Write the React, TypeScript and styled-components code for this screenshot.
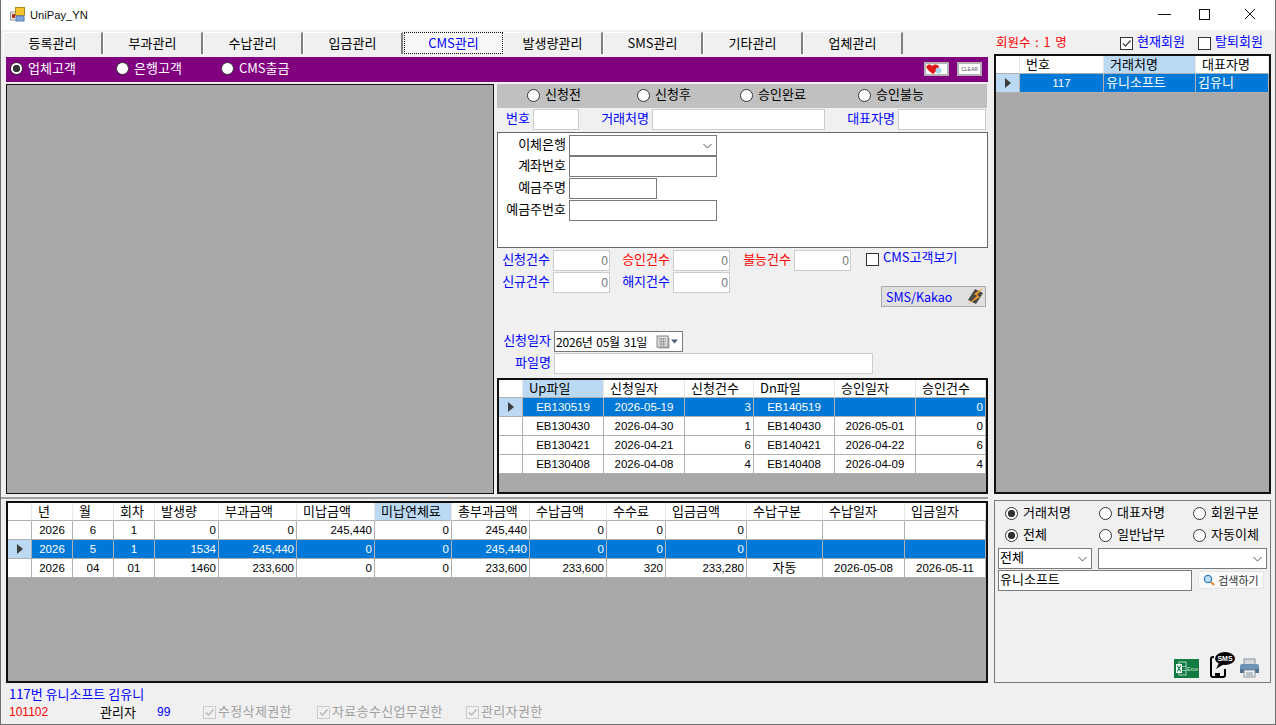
import React from "react";
import styled, { createGlobalStyle } from "styled-components";

const KO = `"Noto Sans CJK KR", "Noto Sans", sans-serif`;
const NUM = `"Liberation Sans", "Noto Sans CJK KR", sans-serif`;

const GlobalStyle = createGlobalStyle`
  html, body { margin: 0; padding: 0; background: #f0f0f0; }
  * { box-sizing: border-box; }
  body { font-family: ${KO}; font-size: 13px; color: #000; }
`;

const Page = styled.div`
  width: 1276px;
  height: 725px;
  overflow: hidden;
  display: flex;
  flex-direction: column;
  background: #f0f0f0;
  border: 1px solid #6e6e6e;
  border-top: 0;
`;

const TitleBar = styled.div`
  height: 30px;
  flex: none;
  display: flex;
  align-items: center;
  background: #fff;
  padding: 0 2px 1px 9px;
`;

const TitleText = styled.span`
  margin-left: 5px;
  font: 11.2px "Liberation Sans", sans-serif;
  color: #111;
`;

const WindowButtons = styled.div`
  margin-left: auto;
  display: flex;
  align-items: center;
  color: #111;
`;

const WindowButton = styled.div<{ $w?: number }>`
  width: ${(p) => p.$w ?? 46}px;
  height: 30px;
  display: grid;
  place-items: center;
  padding-bottom: 1px;
`;

const TabRow = styled.div`
  height: 24px;
  flex: none;
  display: flex;
  align-items: flex-start;
  padding: 2px 0 0 2px;
`;

const Tab = styled.div<{ $active?: boolean }>`
  width: 100px;
  height: 22px;
  display: grid;
  place-items: center;
  padding-bottom: 2px;
  line-height: 1;
  color: ${(p) => (p.$active ? "#0000ff" : "#000")};
  background: ${(p) => (p.$active ? "#f8f8f8" : "#f0f0f0")};
  border-top: 1px solid #fff;
  border-left: 1px solid #fff;
  border-right: 2px solid #808080;
  ${(p) => p.$active && "border: 1px dotted #111; width: 99px; margin-left: 1px;"}
`;

const MemberCount = styled.span`
  margin: 1px 0 0 93px;
  width: 124px;
  color: #f00;
  font-size: 12.5px;
  line-height: 18px;
  word-spacing: 2px;
`;

const CheckLine = styled.label<{ $w?: number }>`
  display: flex;
  align-items: center;
  gap: 4px;
  color: #0000ff;
  white-space: nowrap;
  line-height: 18px;
  height: 18px;
  ${(p) => p.$w && `width: ${p.$w}px;`}
`;

const CheckText = styled.span<{ $lift?: number }>`
  line-height: 14px;
  padding-bottom: ${(p) => p.$lift ?? 4}px;
`;

const TopChecks = styled.div`
  display: flex;
  margin-top: 2px;
`;

const Upper = styled.div`
  height: 445px;
  flex: none;
  display: flex;
  gap: 6px;
`;

const LeftCol = styled.div`
  width: 987px;
  padding: 3px 0 0 5px;
  border-bottom: 2px solid #a0a0a0;
`;

const PurpleBar = styled.div`
  height: 25px;
  display: flex;
  align-items: center;
  background: #800080;
  color: #fff;
  padding: 0 0 2px 4px;
`;

const RadioLine = styled.label<{ $w?: number; $color?: string }>`
  display: flex;
  align-items: center;
  gap: 5px;
  line-height: 18px;
  white-space: nowrap;
  color: ${(p) => p.$color || "inherit"};
  ${(p) => p.$w && `width: ${p.$w}px;`}
`;

const RadioText = styled.span`
  padding-bottom: 2px;
`;

const RadioDot = styled.span<{ $on?: boolean }>`
  width: 13px;
  height: 13px;
  flex: none;
  border-radius: 50%;
  background: ${(p) =>
    p.$on ? "radial-gradient(circle, #333 0 3.4px, #fff 4px)" : "#fff"};
  border: 1px solid #333;
`;

const CheckBox = styled.span<{ $off?: boolean }>`
  width: 13px;
  height: 13px;
  flex: none;
  display: grid;
  place-items: center;
  background: ${(p) => (p.$off ? "#f0f0f0" : "#fff")};
  border: 1px solid ${(p) => (p.$off ? "#ccc" : "#333")};
`;

const MiniButtons = styled.div`
  margin-left: auto;
  display: flex;
  gap: 8px;
  padding-right: 6px;
`;

const MiniButton = styled.div`
  width: 25px;
  height: 14px;
  display: grid;
  place-items: center;
  background: #fff;
  border: 2px solid #b4b4b4;
  font: 5px "Liberation Sans", sans-serif;
  color: #556;
`;

const Body = styled.div`
  display: flex;
  gap: 3px;
  margin-top: 2px;
`;

const EmptyPanel = styled.div`
  width: 488px;
  height: 410px;
  background: #a9a9a9;
  border: 1px solid #111;
`;

const FormCol = styled.div`
  width: 491px;
  display: flex;
  flex-direction: column;
`;

const StatusRadios = styled.div`
  height: 24px;
  width: 490px;
  display: flex;
  align-items: center;
  padding: 0 0 2px 30px;
  background: #c0c0c0;
`;

const FieldRow = styled.div<{ $top?: number }>`
  display: flex;
  align-items: center;
  gap: 3px;
  height: 21px;
  margin-top: ${(p) => p.$top ?? 1}px;
`;

const Label = styled.span<{ $w: number; $color?: string }>`
  width: ${(p) => p.$w}px;
  flex: none;
  text-align: right;
  line-height: 16px;
  padding-bottom: 4px;
  white-space: nowrap;
  color: ${(p) => p.$color || "#0000ff"};
`;

const Input = styled.div<{ $w: number; $dark?: boolean }>`
  width: ${(p) => p.$w}px;
  height: 21px;
  flex: none;
  display: flex;
  align-items: center;
  justify-content: space-between;
  padding: 0 1px;
  background: #fff;
  border: 1px solid ${(p) => (p.$dark ? "#7a7a7a" : "#cdcdcd")};
`;

const CountValue = styled.span`
  margin-left: auto;
  font: 12px ${NUM};
  color: #777;
`;

const BankBox = styled.div`
  width: 491px;
  height: 116px;
  margin-top: 2px;
  padding-top: 2px;
  background: #fff;
  border: 1px solid #666;
`;

const BankRow = styled.div`
  display: flex;
  align-items: center;
  gap: 3px;
  height: 21px;
  margin-bottom: 1px;
  &:first-child {
    margin-bottom: 0;
  }
`;

const Stats = styled.div`
  height: 81px;
  margin-top: 2px;
  display: flex;
`;

const StatsLeft = styled.div`
  width: 369px;
`;

const StatsRight = styled.div`
  flex: 1;
  display: flex;
  flex-direction: column;
  align-items: flex-end;
  padding-right: 1px;
`;

const SmsButton = styled.div`
  width: 105px;
  height: 21px;
  margin-top: 18px;
  margin-right: 1px;
  display: flex;
  align-items: center;
  justify-content: space-between;
  padding: 0 1px 0 4px;
  color: #0000ff;
  background: #dfdfdf;
  border: 1px solid #aaa;
  font-size: 12.5px;
`;

const DateText = styled.span`
  font-size: 12px;
  letter-spacing: -0.2px;
  word-spacing: 1px;
  padding-bottom: 1px;
  white-space: nowrap;
  color: #000;
`;

const PickerIcons = styled.span`
  display: flex;
  align-items: center;
  padding-right: 1px;
`;

const GridSlot = styled.div`
  margin-top: 4px;
`;

const Frame = styled.div<{ $h: number; $top?: number }>`
  height: ${(p) => p.$h}px;
  margin-top: ${(p) => p.$top ?? 0}px;
  display: flex;
  flex-direction: column;
  background: #a9a9a9;
  border: 2px solid #111;
`;

const GridRow = styled.div<{ $cols: string; $h: number; $sel?: boolean }>`
  display: grid;
  grid-template-columns: ${(p) => p.$cols};
  height: ${(p) => p.$h}px;
  flex: none;
  background: ${(p) => (p.$sel ? "#0078d7" : "#fff")};
  color: ${(p) => (p.$sel ? "#fff" : "#000")};
`;

const HeadCell = styled.div<{ $on?: boolean }>`
  padding: 0 0 0 6px;
  background: ${(p) => (p.$on ? "#bbd9f2" : "#fff")};
  border-right: 1px solid #e8e8e8;
  border-bottom: 1px solid #b0b0b0;
  line-height: 16px;
  white-space: nowrap;
`;

const Cell = styled.div<{ $align?: string; $ko?: boolean }>`
  padding: 0 2px;
  text-align: ${(p) => p.$align || "center"};
  font: ${(p) => (p.$ko ? `13px ${KO}` : `11.5px ${NUM}`)};
  line-height: ${(p) => (p.$ko ? 16 : 18)}px;
  border-right: 1px solid #b0b0b0;
  border-bottom: 1px solid #b0b0b0;
  white-space: nowrap;
`;

const RowHead = styled.div<{ $sel?: boolean }>`
  display: grid;
  place-items: center;
  background: ${(p) => (p.$sel ? "#bbd9f2" : "#fff")};
  border-right: 1px solid #b0b0b0;
  border-bottom: 1px solid #b0b0b0;
`;

const Arrow = styled.span`
  width: 0;
  height: 0;
  border-left: 6px solid #3c3c3c;
  border-top: 5px solid transparent;
  border-bottom: 5px solid transparent;
`;

const MemberPanel = styled.div`
  width: 277px;
  height: 440px;
`;

const Lower = styled.div`
  flex: none;
  display: flex;
  gap: 6px;
  padding: 1px 0 0 5px;
`;

const SearchPanel = styled.div`
  width: 277px;
  height: 183px;
  display: flex;
  flex-direction: column;
  padding: 1px 3px 0;
  border: 1px solid #777;
`;

const RadioGroup = styled.div`
  margin-bottom: 2px;
`;

const SearchRadios = styled.div`
  display: flex;
  height: 22px;
  align-items: center;
  padding-left: 7px;
`;

const SearchRow = styled.div`
  display: flex;
  gap: 6px;
  margin-bottom: 1px;
`;

const SearchValue = styled.span`
  line-height: 16px;
  padding-bottom: 3px;
  white-space: nowrap;
`;

const SearchButton = styled.div`
  width: 66px;
  height: 18px;
  margin-top: 1px;
  display: flex;
  align-items: center;
  justify-content: center;
  gap: 3px;
  background: #f9f9f9;
  border: 1px solid #e4e4e4;
  font-size: 11px;
  color: #333;
`;

const ToolIcons = styled.div`
  margin-top: auto;
  display: flex;
  align-items: flex-end;
  justify-content: flex-end;
  padding: 0 7px 4px 0;
`;

const Footer = styled.div`
  flex: 1;
  padding: 2px 0 0 8px;
  line-height: 18px;
`;

const FooterName = styled.div`
  color: #0000ff;
  font-size: 13px;
  line-height: 17px;
`;

const FooterRow = styled.div`
  display: flex;
  align-items: center;
  height: 18px;
  margin-top: 1px;
`;

const FooterText = styled.span<{ $w: number; $color?: string; $num?: boolean }>`
  width: ${(p) => p.$w}px;
  color: ${(p) => p.$color || "#000"};
  font: ${(p) => (p.$num ? `12px ${NUM}` : `13px ${KO}`)};
  line-height: 18px;
`;

const DisabledCheck = styled.label<{ $w: number }>`
  width: ${(p) => p.$w}px;
  display: flex;
  align-items: center;
  gap: 2px;
  color: #a0a0a0;
  letter-spacing: 0.35px;
  white-space: nowrap;
`;

type Col = { title: string; w: number; align?: string };

const DataGrid = ({
  cols,
  rows,
  height,
  top,
  selected,
  activeHead,
}: {
  cols: Col[];
  rows: string[][];
  height: number;
  top?: number;
  selected: number;
  activeHead: number;
}) => {
  const template = `${[24, ...cols.map((c) => c.w)].join("px ")}px`;
  return (
    <Frame $h={height} $top={top}>
      <GridRow $cols={template} $h={18}>
        <HeadCell />
        {cols.map((c, i) => (
          <HeadCell key={c.title} $on={i === activeHead}>
            {c.title}
          </HeadCell>
        ))}
      </GridRow>
      {rows.map((row, r) => (
        <GridRow key={r} $cols={template} $h={19} $sel={r === selected}>
          <RowHead $sel={r === selected}>{r === selected && <Arrow />}</RowHead>
          {row.map((v, i) => (
            <Cell key={i} $align={cols[i].align} $ko={/[가-힣]/.test(v)}>
              {v}
            </Cell>
          ))}
        </GridRow>
      ))}
    </Frame>
  );
};

const Radio = ({
  on,
  w,
  color,
  children,
}: {
  on?: boolean;
  w?: number;
  color?: string;
  children: React.ReactNode;
}) => (
  <RadioLine $w={w} $color={color}>
    <RadioDot $on={on} />
    <RadioText>{children}</RadioText>
  </RadioLine>
);

const Tick = ({ color = "#444" }: { color?: string }) => (
  <svg width="11" height="11" viewBox="0 0 11 11">
    <path d="M2 5.5 L4.5 8 L9.5 2.5" fill="none" stroke={color} strokeWidth="1.3" />
  </svg>
);

const Chevron = () => (
  <svg width="9" height="6" viewBox="0 0 9 6" style={{ marginRight: 3 }}>
    <path d="M0.5 1 L4.5 5 L8.5 1" fill="none" stroke="#555" />
  </svg>
);

const AppIcon = () => (
  <svg width="15" height="15" viewBox="0 0 15 15">
    <rect x="0.5" y="5" width="6" height="8" fill="#e8e8e8" stroke="#999" />
    <rect x="2" y="7" width="3" height="4" fill="#c03020" />
    <rect x="5.5" y="0.5" width="9" height="8" fill="#f4c430" stroke="#a88a20" />
    <rect x="6" y="9" width="8" height="5" fill="#7ea6e0" stroke="#5a7fb8" />
  </svg>
);

const HeartIcon = () => (
  <svg width="21" height="10" viewBox="0 0 21 10">
    <path
      d="M7 10 C3 7 0.5 5 0.5 3 C0.5 0.5 4 -0.5 6 2 C8 -0.5 13 0 13 3 C13 5 10 7.5 7 10 Z"
      fill="#e01818"
    />
    <circle cx="12.5" cy="6.5" r="3" fill="#a8d8f0" />
  </svg>
);

const BoltIcon = () => (
  <svg width="17" height="17" viewBox="0 0 17 17">
    <path d="M8 1 L16 5 L9 16 L1 12 Z" fill="#4c4a46" />
    <path d="M16 0 L7 6 L10 8 L1 16 L13 9 L10 7 Z" fill="#f09a28" />
  </svg>
);

const CalendarIcon = () => (
  <svg width="24" height="14" viewBox="0 0 24 14">
    <rect x="2.5" y="2.5" width="11" height="11" fill="#aaa" />
    <rect x="1" y="1" width="11" height="11" fill="#dcdcdc" stroke="#888" />
    <path d="M3 4 H10 M3 6.5 H10 M3 9 H10 M5 3 V11 M7.5 3 V11" stroke="#888" strokeWidth="0.7" />
    <path d="M15 4.5 H22 L18.5 8.5 Z" fill="#4a6078" />
  </svg>
);

const SearchIcon = () => (
  <svg width="12" height="12" viewBox="0 0 12 12">
    <circle cx="5" cy="5" r="3.6" fill="#bfe0f5" stroke="#2f7fc0" strokeWidth="1.3" />
    <path d="M8 8 L11 11" stroke="#e08020" strokeWidth="1.8" />
  </svg>
);

const ExcelIcon = () => (
  <svg width="25" height="19" viewBox="0 0 25 19">
    <rect width="25" height="19" fill="#107c41" />
    <rect x="5" y="3" width="7" height="13" fill="none" stroke="#cfe8d8" strokeWidth="0.8" />
    <path d="M5 7.5 H12 M5 11.5 H12" stroke="#cfe8d8" strokeWidth="0.6" />
    <rect x="2" y="5" width="6" height="9" fill="#fff" />
    <path d="M3.2 6.5 L6.8 12.5 M6.8 6.5 L3.2 12.5" stroke="#107c41" strokeWidth="1.1" />
    <text x="13" y="12" fontSize="5" fill="#cfe8d8" fontFamily="Liberation Sans">
      Exce
    </text>
  </svg>
);

const SmsIcon = () => (
  <svg width="25" height="26" viewBox="0 0 25 26" style={{ marginLeft: 11 }}>
    <rect x="1" y="5" width="14" height="20" rx="2" fill="none" stroke="#000" strokeWidth="2" />
    <rect x="5" y="21" width="5" height="3" fill="#000" />
    <rect x="4" y="2" width="12" height="15" fill="#f0f0f0" />
    <ellipse cx="15" cy="6.5" rx="10" ry="6.5" fill="#000" />
    <path d="M9 11 L6 17 L14 12 Z" fill="#000" />
    <text x="15" y="9" fontSize="7" fontWeight="700" fill="#fff" textAnchor="middle" fontFamily="Liberation Sans">
      SMS
    </text>
  </svg>
);

const PrinterIcon = () => (
  <svg width="21" height="20" viewBox="0 0 21 20" style={{ marginLeft: 4 }}>
    <rect x="5" y="1" width="11" height="6" fill="#d4d8dc" stroke="#8a96a0" />
    <rect x="1" y="6" width="19" height="9" rx="2" fill="#6d93b5" />
    <rect x="1" y="11" width="19" height="4" fill="#4f7292" />
    <rect x="5" y="12" width="11" height="7" fill="#eef0f2" stroke="#8a96a0" />
    <path d="M7 15 H14 M7 17 H14" stroke="#8a96a0" />
  </svg>
);

const memberCols: Col[] = [
  { title: "번호", w: 84 },
  { title: "거래처명", w: 92, align: "left" },
  { title: "대표자명", w: 73, align: "left" },
];

const cmsCols: Col[] = [
  { title: "Up파일", w: 81 },
  { title: "신청일자", w: 81 },
  { title: "신청건수", w: 69, align: "right" },
  { title: "Dn파일", w: 81 },
  { title: "승인일자", w: 81 },
  { title: "승인건수", w: 70, align: "right" },
];

const cmsRows = [
  ["EB130519", "2026-05-19", "3", "EB140519", "", "0"],
  ["EB130430", "2026-04-30", "1", "EB140430", "2026-05-01", "0"],
  ["EB130421", "2026-04-21", "6", "EB140421", "2026-04-22", "6"],
  ["EB130408", "2026-04-08", "4", "EB140408", "2026-04-09", "4"],
];

const billCols: Col[] = [
  { title: "년", w: 41 },
  { title: "월", w: 41 },
  { title: "회차", w: 41 },
  { title: "발생량", w: 64, align: "right" },
  { title: "부과금액", w: 78, align: "right" },
  { title: "미납금액", w: 78, align: "right" },
  { title: "미납연체료", w: 77, align: "right" },
  { title: "총부과금액", w: 78, align: "right" },
  { title: "수납금액", w: 77, align: "right" },
  { title: "수수료", w: 59, align: "right" },
  { title: "입금금액", w: 81, align: "right" },
  { title: "수납구분", w: 76 },
  { title: "수납일자", w: 82 },
  { title: "입금일자", w: 81 },
];

const billRows = [
  ["2026", "6", "1", "0", "0", "245,440", "0", "245,440", "0", "0", "0", "", "", ""],
  ["2026", "5", "1", "1534", "245,440", "0", "0", "245,440", "0", "0", "0", "", "", ""],
  ["2026", "04", "01", "1460", "233,600", "0", "0", "233,600", "233,600", "320", "233,280", "자동", "2026-05-08", "2026-05-11"],
];

export default function App() {
  return (
    <Page>
      <GlobalStyle />
      <TitleBar>
        <AppIcon />
        <TitleText>UniPay_YN</TitleText>
        <WindowButtons>
          <WindowButton $w={33}>
            <svg width="13" height="13" viewBox="0 0 13 13">
              <path d="M0 6.5 H13" stroke="#111" />
            </svg>
          </WindowButton>
          <WindowButton>
            <svg width="11" height="11" viewBox="0 0 11 11">
              <rect x="0.5" y="0.5" width="10" height="10" fill="none" stroke="#111" />
            </svg>
          </WindowButton>
          <WindowButton>
            <svg width="12" height="12" viewBox="0 0 12 12">
              <path d="M1 1 L11 11 M11 1 L1 11" stroke="#111" />
            </svg>
          </WindowButton>
        </WindowButtons>
      </TitleBar>

      <TabRow>
        {["등록관리", "부과관리", "수납관리", "입금관리", "CMS관리", "발생량관리", "SMS관리", "기타관리", "업체관리"].map((t) => (
          <Tab key={t} $active={t === "CMS관리"}>
            {t}
          </Tab>
        ))}
        <MemberCount>회원수 : 1 명</MemberCount>
        <TopChecks>
          <CheckLine $w={78}>
            <CheckBox>
              <Tick />
            </CheckBox>
            <CheckText>현재회원</CheckText>
          </CheckLine>
          <CheckLine>
            <CheckBox />
            <CheckText>탈퇴회원</CheckText>
          </CheckLine>
        </TopChecks>
      </TabRow>

      <Upper>
        <LeftCol>
          <PurpleBar>
            <Radio on w={106}>업체고객</Radio>
            <Radio w={105}>은행고객</Radio>
            <Radio>CMS출금</Radio>
            <MiniButtons>
              <MiniButton>
                <HeartIcon />
              </MiniButton>
              <MiniButton>CLEAR</MiniButton>
            </MiniButtons>
          </PurpleBar>
          <Body>
            <EmptyPanel />
            <FormCol>
              <StatusRadios>
                <Radio w={110}>신청전</Radio>
                <Radio w={103}>신청후</Radio>
                <Radio w={118}>승인완료</Radio>
                <Radio>승인불능</Radio>
              </StatusRadios>
              <FieldRow>
                <Label $w={33}>번호</Label>
                <Input $w={46} />
                <Label $w={67}>거래처명</Label>
                <Input $w={173} />
                <Label $w={67}>대표자명</Label>
                <Input $w={88} />
              </FieldRow>
              <BankBox>
                <BankRow>
                  <Label $w={68} $color="#000">이체은행</Label>
                  <Input $w={148} $dark>
                    <span />
                    <Chevron />
                  </Input>
                </BankRow>
                <BankRow>
                  <Label $w={68} $color="#000">계좌번호</Label>
                  <Input $w={148} $dark />
                </BankRow>
                <BankRow>
                  <Label $w={68} $color="#000">예금주명</Label>
                  <Input $w={88} $dark />
                </BankRow>
                <BankRow>
                  <Label $w={68} $color="#000">예금주번호</Label>
                  <Input $w={148} $dark />
                </BankRow>
              </BankBox>
              <Stats>
                <StatsLeft>
                  <FieldRow $top={0}>
                    <Label $w={53}>신청건수</Label>
                    <Input $w={57}><CountValue>0</CountValue></Input>
                    <Label $w={57} $color="#f00">승인건수</Label>
                    <Input $w={57}><CountValue>0</CountValue></Input>
                    <Label $w={58} $color="#f00">불능건수</Label>
                    <Input $w={57}><CountValue>0</CountValue></Input>
                  </FieldRow>
                  <FieldRow>
                    <Label $w={53}>신규건수</Label>
                    <Input $w={57}><CountValue>0</CountValue></Input>
                    <Label $w={57}>해지건수</Label>
                    <Input $w={57}><CountValue>0</CountValue></Input>
                  </FieldRow>
                </StatsLeft>
                <StatsRight>
                  <CheckLine $w={121}>
                    <CheckBox />
                    <CheckText>CMS고객보기</CheckText>
                  </CheckLine>
                  <SmsButton>
                    SMS/Kakao
                    <BoltIcon />
                  </SmsButton>
                </StatsRight>
              </Stats>
              <FieldRow $top={0}>
                <Label $w={54}>신청일자</Label>
                <Input $w={129} $dark>
                  <DateText>2026년 05월 31일</DateText>
                  <PickerIcons>
                    <CalendarIcon />
                  </PickerIcons>
                </Input>
              </FieldRow>
              <FieldRow>
                <Label $w={54}>파일명</Label>
                <Input $w={319} />
              </FieldRow>
              <GridSlot>
                <DataGrid cols={cmsCols} rows={cmsRows} height={116} selected={0} activeHead={0} />
              </GridSlot>
            </FormCol>
          </Body>
        </LeftCol>
        <MemberPanel>
          <DataGrid
            cols={memberCols}
            rows={[["117", "유니소프트", "김유니"]]}
            height={440}
            selected={0}
            activeHead={1}
          />
        </MemberPanel>
      </Upper>

      <Lower>
        <DataGrid cols={billCols} rows={billRows} height={182} top={1} selected={1} activeHead={6} />
        <SearchPanel>
          <RadioGroup>
            <SearchRadios>
              <Radio on w={94}>거래처명</Radio>
              <Radio w={94}>대표자명</Radio>
              <Radio>회원구분</Radio>
            </SearchRadios>
            <SearchRadios>
              <Radio on w={94}>전체</Radio>
              <Radio w={94}>일반납부</Radio>
              <Radio>자동이체</Radio>
            </SearchRadios>
          </RadioGroup>
          <SearchRow>
            <Input $w={94} $dark>
              <SearchValue>전체</SearchValue>
              <Chevron />
            </Input>
            <Input $w={169} $dark>
              <span />
              <Chevron />
            </Input>
          </SearchRow>
          <SearchRow>
            <Input $w={194} $dark>
              <SearchValue>유니소프트</SearchValue>
            </Input>
            <SearchButton>
              <SearchIcon />
              검색하기
            </SearchButton>
          </SearchRow>
          <ToolIcons>
            <ExcelIcon />
            <SmsIcon />
            <PrinterIcon />
          </ToolIcons>
        </SearchPanel>
      </Lower>

      <Footer>
        <FooterName>117번 유니소프트 김유니</FooterName>
        <FooterRow>
          <FooterText $w={91} $color="#f00" $num>101102</FooterText>
          <FooterText $w={57}>관리자</FooterText>
          <FooterText $w={46} $color="#0000ff" $num>99</FooterText>
          <DisabledCheck $w={114}>
            <CheckBox $off>
              <Tick color="#b5b5b5" />
            </CheckBox>
            <CheckText $lift={2}>수정삭제권한</CheckText>
          </DisabledCheck>
          <DisabledCheck $w={149}>
            <CheckBox $off>
              <Tick color="#b5b5b5" />
            </CheckBox>
            <CheckText $lift={2}>자료송수신업무권한</CheckText>
          </DisabledCheck>
          <DisabledCheck $w={100}>
            <CheckBox $off>
              <Tick color="#b5b5b5" />
            </CheckBox>
            <CheckText $lift={2}>관리자권한</CheckText>
          </DisabledCheck>
        </FooterRow>
      </Footer>
    </Page>
  );
}
